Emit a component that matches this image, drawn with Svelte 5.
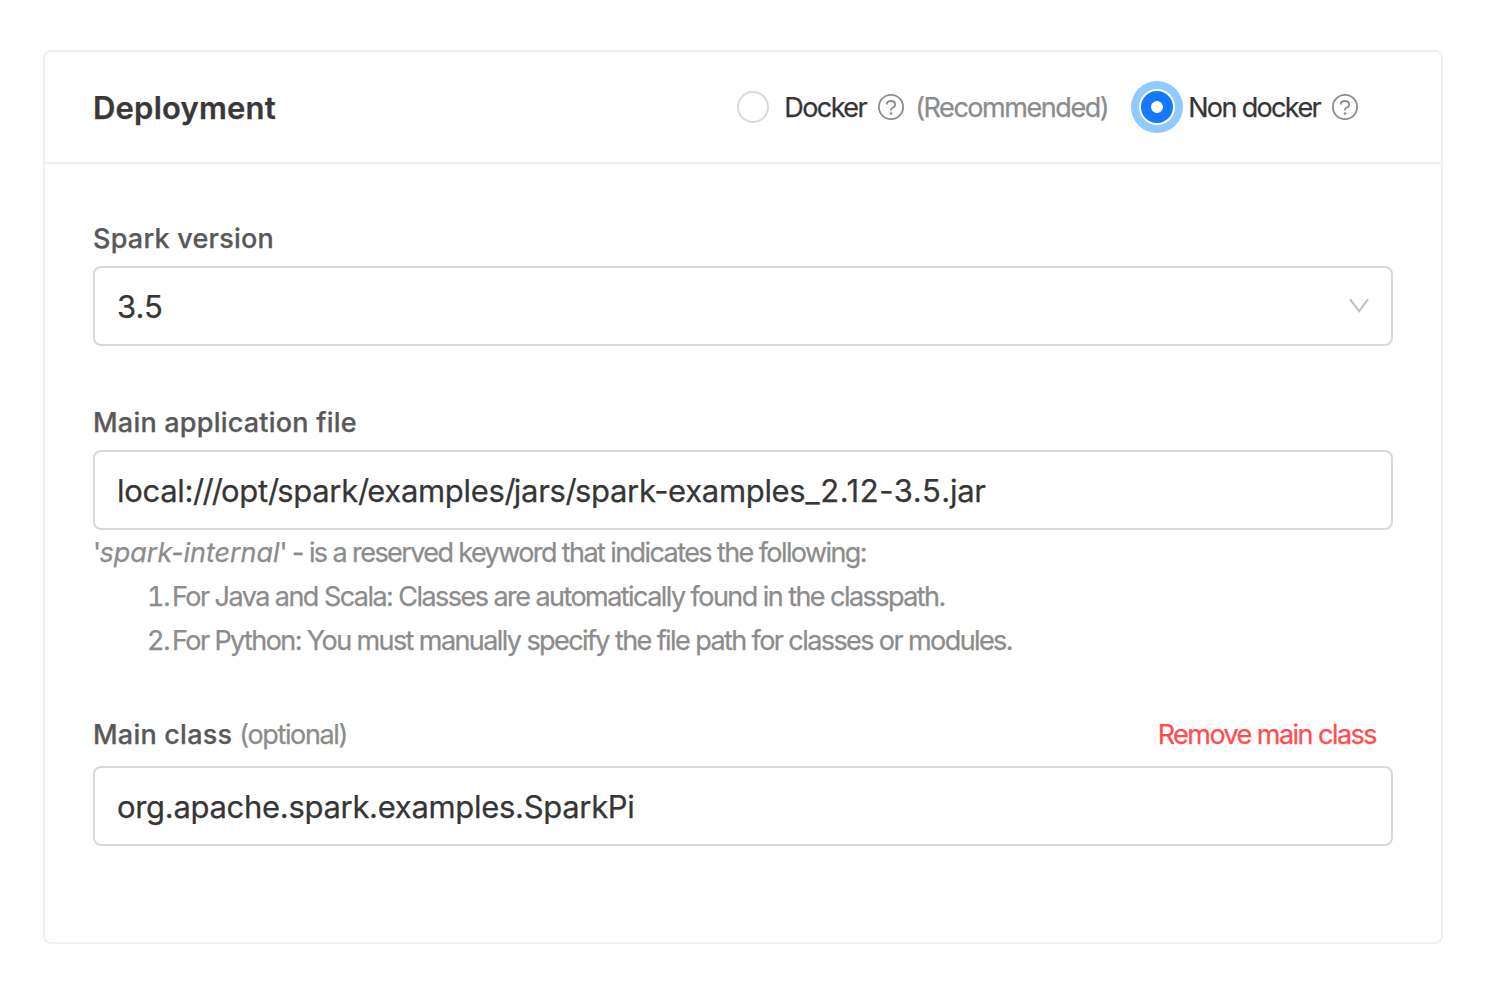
<script>
  let version = '3.5';
  let mainClass = 'org.apache.spark.examples.SparkPi';
  const dirs = ['opt', 'spark', 'examples', 'jars'];
</script>

{#snippet help()}
  <svg class="help" viewBox="0 0 26 26" width="26" height="26" fill="none" stroke="currentColor" stroke-width="1.8" aria-hidden="true">
    <circle cx="13" cy="13" r="12.1" />
    <path d="M8.900 10.600v-.4C8.900 8.300 10.700 7 13 7s4.100 1.400 4.100 3.400c0 1.500-.9 2.600-2.400 3.200-1.100.4-1.700 1.200-1.700 2.300v.5" />
    <circle cx="13" cy="19.500" r="1.300" fill="currentColor" stroke="none" />
  </svg>
{/snippet}

<main>
  <section class="card">
    <header>
      <h2>Deployment</h2>
      <div class="options">
        <span class="radio"></span>
        <span class="docker">Docker</span>
        {@render help()}
        <span class="rec">(Recommended)</span>
        <span class="radio checked"></span>
        <span class="non">Non docker</span>
        {@render help()}
      </div>
    </header>
    <div class="body">
      <div class="field">
        <div class="label"><span>Spark version</span></div>
        <div class="box"><span class="v1">{version}</span>
          <svg class="chev" width="20" height="16" viewBox="0 0 20 16" fill="none" stroke="#bfbfbf" stroke-width="2"><path d="M1 1.200 10 13.300 19 1.200" /></svg>
        </div>
      </div>
      <div class="field file">
        <div class="label"><span>Main application file</span></div>
        <div class="box"><span>local:<span class="sl">//</span>{#each dirs as d}<span class="sl">/</span>{d}{/each}<span class="sl">/</span>spark-examples<span class="tn">_2.12-3.5</span>.jar</span></div>
        <div class="hint">
          <p>'<em>spark-internal</em>' - is a reserved keyword that indicates the following:</p>
          <p class="item"><span class="num">1.</span><span class="i1">For Java and Scala: Classes are automatically found in the classpath.</span></p>
          <p class="item"><span class="num">2.</span><span>For Python: You must manually specify the file path for classes or modules.</span></p>
        </div>
      </div>
      <div class="field cls">
        <div class="label"><span>Main class</span><span class="opt">(optional)</span><span class="remove">Remove main class</span></div>
        <div class="box"><span>{mainClass}</span></div>
      </div>
    </div>
  </section>
</main>

<style>
  :global(body) { background: #fff; }
  main { box-sizing: border-box; height: 984px; padding: 50px 49px 40px 43px; font-family: Inter, sans-serif; font-weight: 400; -webkit-text-stroke: 0.25px currentColor; color: #363636; overflow: hidden; }
  .card { box-sizing: border-box; height: 894px; border: 2px solid #f0f0f0; border-radius: 8px; }
  header { box-sizing: border-box; height: 112px; border-bottom: 2px solid #f0f0f0; padding: 0 83px 0 48px; display: flex; align-items: center; justify-content: space-between; }
  h2 { margin: 0; font-size: 31px; font-weight: 600; letter-spacing: 0.2px; color: #383838; }
  .options { display: flex; align-items: center; font-size: 27px; letter-spacing: -1.55px; white-space: nowrap; }
  .radio { box-sizing: border-box; width: 32px; height: 32px; border: 2px solid #d9d9d9; border-radius: 50%; margin-right: 15px; }
  .checked { border: 10px solid #1677ff; box-shadow: 0 0 0 2px #fff, 0 0 0 10px #91caff; margin: 0 15px 0 33px; }
  .help { color: #8c8c8c; margin-left: 12px; flex: none; }
  .rec { color: #8c8c8c; margin-left: 11px; letter-spacing: -1.45px; }
  .non { letter-spacing: -1.65px; }
  .body { padding: 52px 48px 0; }
  .label { height: 44px; line-height: 45px; margin-bottom: 6px; display: flex; font-size: 27px; font-weight: 500; letter-spacing: 0.22px; color: #595959; white-space: nowrap; }
  .box { box-sizing: border-box; height: 80px; border: 2px solid #d9d9d9; border-radius: 8px; padding: 0 22px; display: flex; align-items: center; justify-content: space-between; font-size: 31px; letter-spacing: -0.31px; white-space: nowrap; }
  .sl { letter-spacing: -1.850px; }
  .tn { letter-spacing: 0.6px; }
  .v1 { letter-spacing: 0; }
  .file { margin-top: 54px; }
  .hint { color: #8c8c8c; font-size: 27px; letter-spacing: -1.59px; line-height: 46px; white-space: nowrap; }
  em { letter-spacing: -0.02px; }
  p { margin: 0; height: 44px; }
  .item { padding-left: 54px; display: flex; gap: 5px; }
  .i1 { letter-spacing: -1.55px; }
  .num { width: 20px; text-align: right; letter-spacing: -1.2px; font-feature-settings: 'tnum'; }
  .cls { margin-top: 50px; }
  .cls .label { margin-bottom: 10px; }
  .opt { margin-left: 7px; font-weight: 400; color: #8c8c8c; letter-spacing: -1.35px; }
  .remove { margin-left: auto; padding-right: 17px; font-weight: 400; color: #ff4d4f; letter-spacing: -1.54px; }
</style>
